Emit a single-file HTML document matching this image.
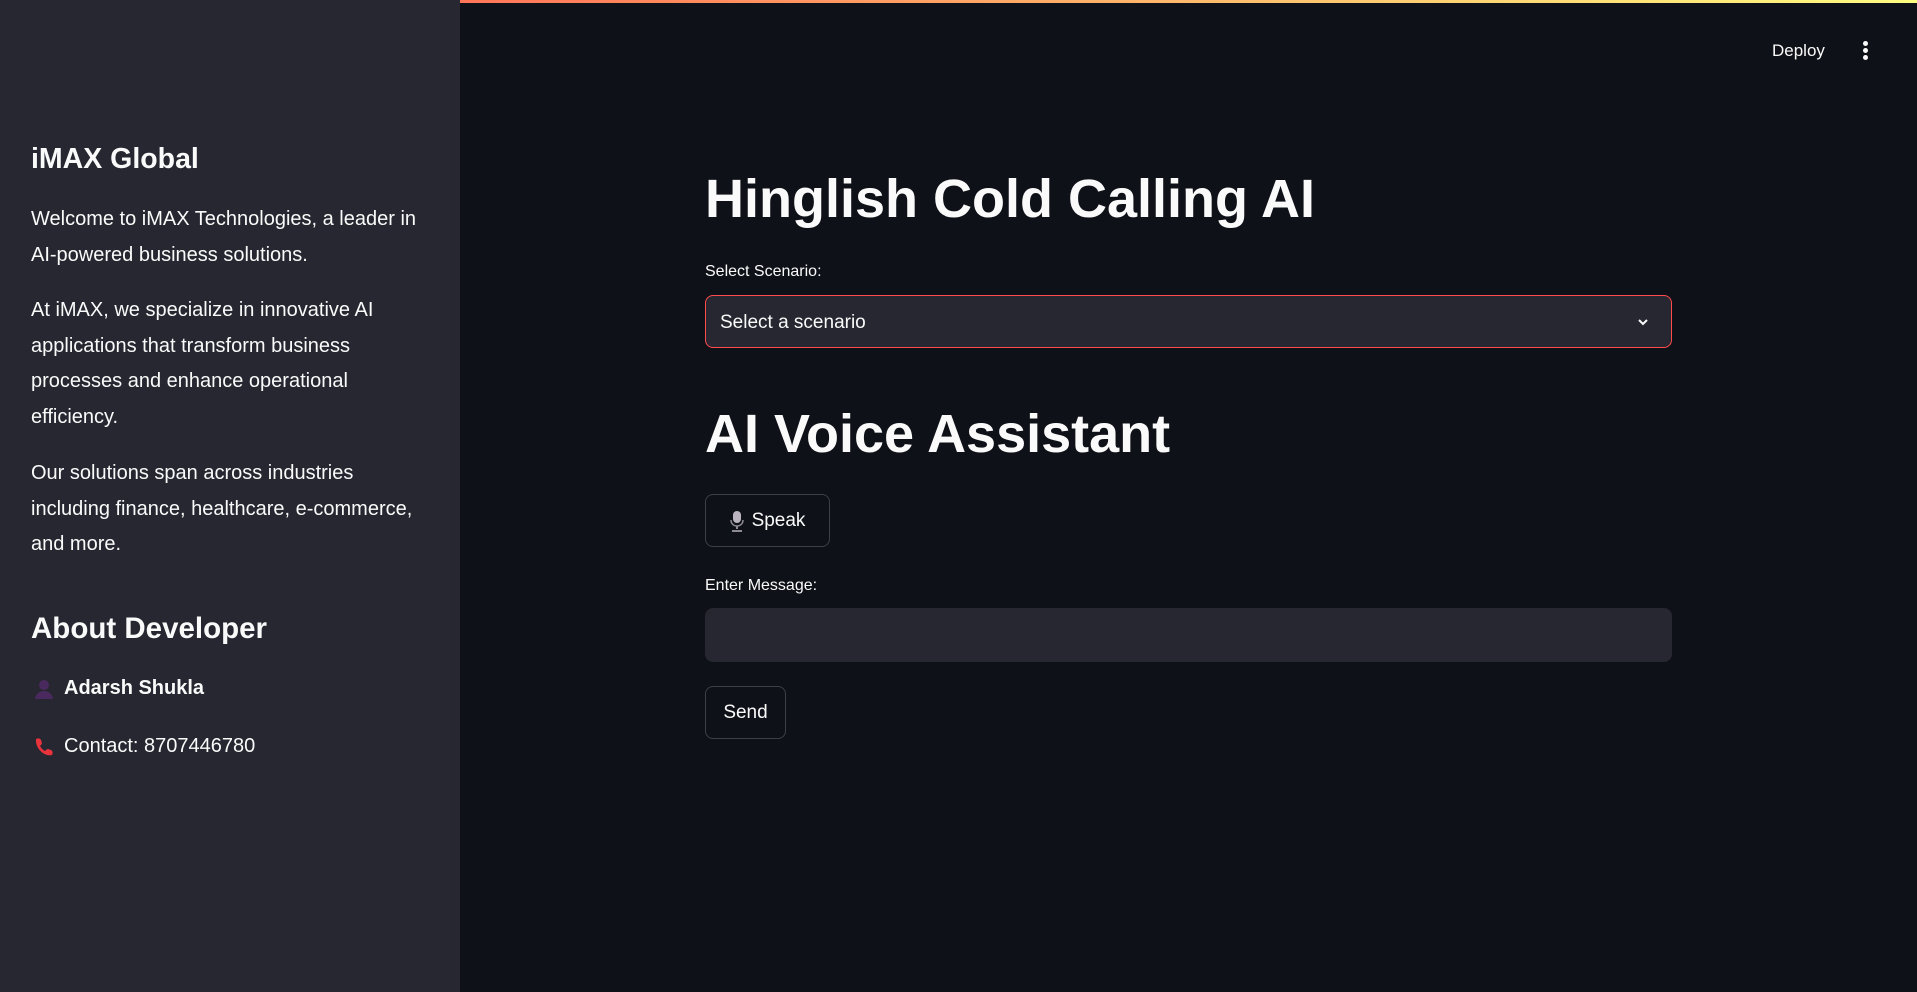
<!DOCTYPE html>
<html><head><meta charset="utf-8"><style>
*{margin:0;padding:0;box-sizing:border-box}
html,body{width:1917px;height:992px;overflow:hidden;background:#0e1117;font-family:"Liberation Sans",sans-serif;color:#fafafa}
.bar{position:absolute;top:0;left:0;width:1917px;height:3px;background:linear-gradient(90deg,#ff4b4b,#fffd80)}
.side{position:absolute;top:0;left:0;width:460px;height:992px;background:#262730}
.side h2{position:absolute;left:31px;font-weight:bold;color:#fafafa}
.side p{position:absolute;left:31px;font-size:20px;line-height:35.5px;color:#fafafa}
.deploy{position:absolute;left:1772px;top:41px;font-size:17px}
.dots{position:absolute;left:1863px;top:41px}
.dots i{display:block;width:5px;height:5px;border-radius:50%;background:#fafafa;margin-bottom:2px}
.h{position:absolute;left:705px;font-weight:bold;font-size:54px;white-space:nowrap}
.lbl{position:absolute;left:705px;font-size:16px}
.box{position:absolute;left:705px;width:967px;background:#262730;border-radius:8px}
.btn{position:absolute;left:705px;border:1px solid rgba(250,250,250,0.2);border-radius:8px;font-size:19px;display:flex;align-items:center;justify-content:center}
</style></head><body>
<div class="bar"></div>
<div class="side">
<h2 style="top:143px;font-size:28.5px">iMAX Global</h2>
<p style="top:202px">Welcome to iMAX Technologies, a leader in<br>AI-powered business solutions.</p>
<p style="top:293px">At iMAX, we specialize in innovative AI<br>applications that transform business<br>processes and enhance operational<br>efficiency.</p>
<p style="top:456px">Our solutions span across industries<br>including finance, healthcare, e-commerce,<br>and more.</p>
<h2 style="top:612px;font-size:29.5px">About Developer</h2>
<div style="position:absolute;left:33px;top:677px;display:flex;align-items:center;gap:9px;font-size:20px;font-weight:bold">
<svg width="22" height="22" viewBox="0 0 22 22"><circle cx="11" cy="7" r="5" fill="#4a2a5e"/><path d="M2 21c1-6 5-8 9-8s8 2 9 8z" fill="#4a2a5e"/></svg>Adarsh Shukla</div>
<div style="position:absolute;left:33px;top:735px;display:flex;align-items:center;gap:9px;font-size:20px">
<svg width="22" height="22" viewBox="0 0 22 22"><path d="M3 3c2-1 4-1 5 1l1 3c0 1-1 2-2 3 1 2 3 4 5 5 1-1 2-2 3-2l3 1c2 1 2 3 1 5-8 2-17-7-16-16z" fill="#e8323c"/></svg>Contact: 8707446780</div>
</div>
<div class="deploy">Deploy</div>
<div class="dots"><i></i><i></i><i></i></div>
<div class="h" style="top:168px">Hinglish Cold Calling AI</div>
<div class="lbl" style="top:263px">Select Scenario:</div>
<div class="box" style="top:295px;height:53px;border:1px solid #ff4b4b">
<span style="position:absolute;left:14px;top:16px;font-size:19px">Select a scenario</span>
<svg style="position:absolute;left:930px;top:19px" width="14" height="14" viewBox="0 0 14 14"><path d="M3 5l4 4 4-4" stroke="#fafafa" stroke-width="2" fill="none"/></svg>
</div>
<div class="h" style="top:403px">AI Voice Assistant</div>
<div class="btn" style="top:494px;width:125px;height:53px;gap:8px">
<svg width="14" height="22" viewBox="0 0 14 22"><rect x="3" y="1" width="8" height="12" rx="4" fill="#b9b4bf"/><path d="M1 10c0 4 3 6 6 6s6-2 6-6" stroke="#8e8a94" stroke-width="1.5" fill="none"/><path d="M7 16v3M2 21h10" stroke="#8e8a94" stroke-width="2"/></svg>Speak</div>
<div class="lbl" style="top:577px">Enter Message:</div>
<div class="box" style="top:608px;height:54px"></div>
<div class="btn" style="top:686px;width:81px;height:53px">Send</div>
</body></html>
